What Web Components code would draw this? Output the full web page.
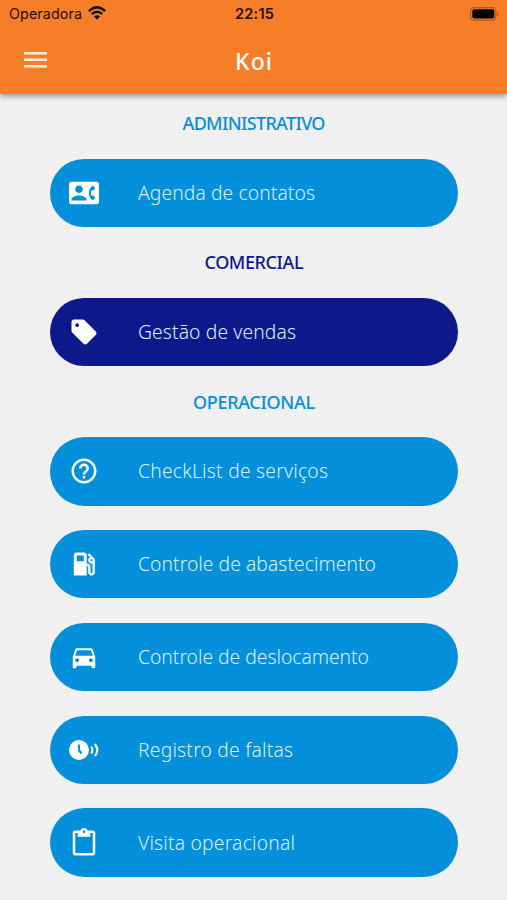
<!DOCTYPE html>
<html lang="pt-BR">
<head>
<meta charset="utf-8">
<title>Koi</title>
<style>
html,body{margin:0;height:100%;background:#f0f0f0;overflow:hidden}
</style>
</head>
<body>
<koi-app></koi-app>
<script>
const icons = {
  contact: '<path d="M22 3H2C.9 3 0 3.9 0 5v14c0 1.1.9 2 2 2h20c1.1 0 2-.9 2-2V5c0-1.1-.9-2-2-2zM8 6c1.66 0 3 1.34 3 3s-1.34 3-3 3-3-1.34-3-3 1.34-3 3-3zm6 12H2v-1c0-2 4-3.1 6-3.1s6 1.1 6 3.1v1zm3.85-4h1.64L21 16l-1.99 1.99c-1.31-.98-2.28-2.38-2.73-3.99-.18-.64-.28-1.31-.28-2s.1-1.36.28-2c.45-1.62 1.42-3.01 2.73-3.99L21 8l-1.51 2h-1.64c-.22.63-.35 1.3-.35 2s.13 1.37.35 2z"/>',
  tag: '<path d="M21.41 11.58l-9-9C12.05 2.22 11.55 2 11 2H4c-1.1 0-2 .9-2 2v7c0 .55.22 1.05.59 1.42l9 9c.36.36.86.58 1.41.58s1.05-.22 1.41-.59l7-7c.37-.36.59-.86.59-1.41s-.23-1.06-.59-1.42zM6.5 8C5.67 8 5 7.33 5 6.5S5.67 5 6.5 5 8 5.67 8 6.5 7.33 8 6.5 8z"/>',
  help: '<path d="M11 18h2v-2h-2v2zm1-16C6.48 2 2 6.48 2 12s4.48 10 10 10 10-4.48 10-10S17.52 2 12 2zm0 18c-4.41 0-8-3.59-8-8s3.59-8 8-8 8 3.59 8 8-3.59 8-8 8zm0-14c-2.21 0-4 1.79-4 4h2c0-1.1.9-2 2-2s2 .9 2 2c0 2-3 1.75-3 5h2c0-2.25 3-2.5 3-5 0-2.21-1.79-4-4-4z"/>',
  fuel: '<path d="M19.77 7.23l.01-.01-3.72-3.72L15 4.56l2.11 2.11c-.94.36-1.61 1.26-1.61 2.33 0 1.38 1.12 2.5 2.5 2.5.36 0 .69-.08 1-.21v7.21c0 .55-.45 1-1 1s-1-.45-1-1V14c0-1.1-.9-2-2-2h-1V5c0-1.1-.9-2-2-2H6c-1.1 0-2 .9-2 2v16h10v-7.500h1.500v5c0 1.380 1.120 2.500 2.500 2.500s2.500-1.120 2.500-2.500V9c0-.69-.28-1.320-.73-1.770zM12 10H6V5h6v5zm6 0c-.55 0-1-.45-1-1s.45-1 1-1 1 .45 1 1-.45 1-1 1z" stroke="#fff" stroke-width=".35"/>',
  car: '<path d="M18.920 6.010C18.720 5.420 18.160 5 17.500 5h-11c-.66 0-1.210.42-1.420 1.010L3 12v8c0 .55.45 1 1 1h1c.55 0 1-.45 1-1v-1h12v1c0 .55.45 1 1 1h1c.55 0 1-.45 1-1v-8l-2.080-5.990zM6.500 16c-.83 0-1.500-.67-1.500-1.500S5.670 13 6.500 13s1.500.67 1.500 1.500S7.330 16 6.500 16zm11 0c-.83 0-1.500-.67-1.500-1.500s.67-1.500 1.500-1.500 1.500.67 1.500 1.500-.67 1.500-1.500 1.500zM5 11l1.500-4.500h11L19 11H5z"/>',
  clock: '<circle cx="8" cy="12" r="8"/><path d="M8 7.500v4.700l2 2.600" fill="none" stroke="var(--tone)" stroke-width="1.700"/><path d="M17.800 9.200q1.800 2.800 0 5.600M20.600 7.200q4.200 4.800 0 9.600" fill="none" stroke="#fff" stroke-width="1.700"/>',
  clipboard: '<path d="M19 2h-4.180C14.400.84 13.300 0 12 0S9.600.84 9.180 2H5c-1.100 0-2 .9-2 2v16c0 1.100.9 2 2 2h14c1.100 0 2-.9 2-2V4c0-1.100-.9-2-2-2zm-7 0c.55 0 1 .45 1 1s-.45 1-1 1-1-.45-1-1 .45-1 1-1zm7 18H5V4h2v3h10V4h2v16z"/>'
};

function define(name, html, setup) {
  customElements.define(name, class extends HTMLElement {
    connectedCallback() {
      if (this.shadowRoot) return;
      this.attachShadow({mode: 'open'}).innerHTML = html;
      if (setup) setup(this, this.shadowRoot);
    }
  });
}

/* One line of text whose tracking is adjusted to fill the "width" attribute. */
define('fit-text', `<style>:host{display:inline-block;white-space:pre}span{display:inline-block}</style><span><slot></slot></span>`, el => {
  /* Runs once every element is defined, so the inherited font is final. */
  queueMicrotask(() => {
    const span = el.shadowRoot.querySelector('span');
    const natural = span.getBoundingClientRect().width;
    const spacing = (+el.getAttribute('width') - natural) / (el.textContent.length - 1);
    span.style.letterSpacing = spacing + 'px';
    span.style.marginRight = -spacing + 'px';
  });
});

define('status-bar', `<style>
:host{display:grid;grid-template-columns:1fr auto 1fr;align-items:center;height:27px;padding:0 7px 0 9px;color:#251000;font:14.300px/27px Inter,"Liberation Sans",sans-serif}
.left{display:flex;align-items:center;gap:6px}
.time{font-weight:600;font-size:14.500px}
.battery{justify-self:end;display:block}
svg{display:block}
.left svg{margin-top:-2px}
</style>
<div class="left"><fit-text width="73">Operadora</fit-text>
<svg width="18" height="14" viewBox="0 0 18 14" fill="none" stroke="#120800" stroke-width="2.300"><path d="M.8 5.200Q9-2.600 17.200 5.200"/><path d="M3.800 8.200Q9 3.400 14.200 8.200"/><path d="M9 13.600L5.900 10.500Q9 7.900 12.100 10.500Z" fill="#120800" stroke="none"/></svg></div>
<fit-text class="time" width="39">22:15</fit-text>
<svg class="battery" width="30" height="14" viewBox="0 0 30 14"><rect x=".6" y=".6" width="25.300" height="12.600" rx="3.600" fill="none" stroke="#a9581f" stroke-width="1.200"/><rect x="2.300" y="2.300" width="22" height="9.300" rx="2" fill="#000"/><path d="M27.300 4.700q2.600 2.200 0 4.400z" fill="#a9581f"/></svg>`);

define('app-header', `<style>
:host{display:block;height:94px;background:#f77e29;box-shadow:0 2px 6px rgba(0,0,0,.42);position:relative}
.bar{display:grid;grid-template-columns:1fr auto 1fr;align-items:center;height:67px;padding:0 24px;color:#fff;font:500 23px/30px "Noto Sans","Open Sans",sans-serif}
svg{display:block;margin-top:-2px}
</style><status-bar></status-bar>
<div class="bar"><svg width="23" height="16" viewBox="0 0 23 16" fill="#ffeedd"><path d="M0 0h23v2.600H0zM0 6.500h23v2.600H0zM0 13h23v2.600H0z"/></svg><fit-text width="37">Koi</fit-text><span></span></div>`);

define('section-title', `<style>
:host{display:flex;justify-content:center;align-items:flex-start;box-sizing:border-box;height:46.500px;padding-top:-1px;color:var(--tone);font:500 18px/22px "Noto Sans","Open Sans",sans-serif}
</style><slot></slot>`);

define('menu-button', `<style>
:host{display:flex;align-items:center;box-sizing:border-box;height:68.400px;margin-bottom:24.400px;padding-left:19px;border-radius:35px;background:var(--tone);color:#d9f1ff;font:350 19.300px/26px "Noto Sans","Open Sans",sans-serif}
svg{display:block;width:30px;height:30px;fill:#fff;margin-right:39px;flex:none}
</style><svg viewBox="0 0 24 24"></svg><slot></slot>`, (el, root) => {
  root.querySelector('svg').innerHTML = icons[el.getAttribute('icon')];
});

define('koi-app', `<style>
:host{display:block;height:900px;overflow:hidden;background:#f0f0f0}
main{padding:18.200px 49px 0 50px}
section{--tone:#038fd9}
section.navy{--tone:#0d198b}
</style>
<app-header></app-header>
<main>
<section><section-title><fit-text width="143">ADMINISTRATIVO</fit-text></section-title>
<menu-button icon="contact"><fit-text width="177">Agenda de contatos</fit-text></menu-button></section>
<section class="navy"><section-title><fit-text width="99">COMERCIAL</fit-text></section-title>
<menu-button icon="tag"><fit-text width="158">Gestão de vendas</fit-text></menu-button></section>
<section><section-title><fit-text width="122">OPERACIONAL</fit-text></section-title>
<menu-button icon="help"><fit-text width="190">CheckList de serviços</fit-text></menu-button>
<menu-button icon="fuel"><fit-text width="238">Controle de abastecimento</fit-text></menu-button>
<menu-button icon="car"><fit-text width="231">Controle de deslocamento</fit-text></menu-button>
<menu-button icon="clock"><fit-text width="155">Registro de faltas</fit-text></menu-button>
<menu-button icon="clipboard"><fit-text width="157">Visita operacional</fit-text></menu-button></section>
</main>`);
</script>
</body>
</html>
